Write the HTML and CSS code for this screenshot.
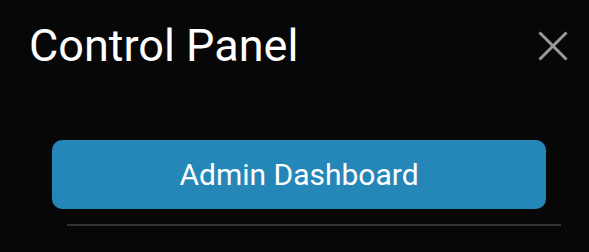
FILE: index.html
```html
<!DOCTYPE html>
<html>
<head>
  <title>Control Panel</title>
  <meta charset="UTF-8" />
  <meta name="viewport" content="width=device-width, initial-scale=1" />
  <link rel="stylesheet" href="styles.css">
</head>
<body>
  <div class="panel">
    <div class="panel-header">
      <h1>Control Panel</h1>
      <button class="close-btn" aria-label="Close">
        <svg width="30" height="30" viewBox="0 0 30 30">
          <path d="M1.5 1.5 L28.5 28.5 M28.5 1.5 L1.5 28.5" stroke="currentColor" stroke-width="3" stroke-linecap="butt" fill="none" />
        </svg>
      </button>
    </div>

    <div class="panel-menu">
      <button class="menu-btn">Admin Dashboard</button>
      <div class="divider"></div>
    </div>
  </div>
</body>
</html>
```

FILE: styles.css
```css
:root {
  --bg: #070707;
  --text: #ffffff;
  --muted: #999999;
  --accent: #2587b8;
  --line: #333333;
}

body {
  margin: 0;
  padding: 0;
  background-color: var(--bg);
  color: var(--text);
  font-family: 'Roboto', 'Liberation Sans', sans-serif;
}

.panel {
  width: 589px;
  height: 252px;
  overflow: hidden;
}

/* Header */
.panel-header {
  display: flex;
  justify-content: space-between;
  align-items: center;
  padding: 20px 21px 0 29px;
}

.panel-header h1 {
  margin: 0;
  font-size: 45px;
  font-weight: 400;
  line-height: 52px;
}

.close-btn {
  background: none;
  border: none;
  padding: 0;
  color: var(--muted);
  cursor: pointer;
  display: flex;
}

/* Menu */
.panel-menu {
  display: flex;
  flex-direction: column;
  padding: 68px 43px 0 52px;
}

.menu-btn {
  height: 69px;
  background-color: var(--accent);
  color: #fff;
  border: none;
  border-radius: 10px;
  font-family: inherit;
  font-size: 30px;
  cursor: pointer;
}

.divider {
  height: 2px;
  background-color: var(--line);
  margin: 15px -15px 0 15px;
}
```
